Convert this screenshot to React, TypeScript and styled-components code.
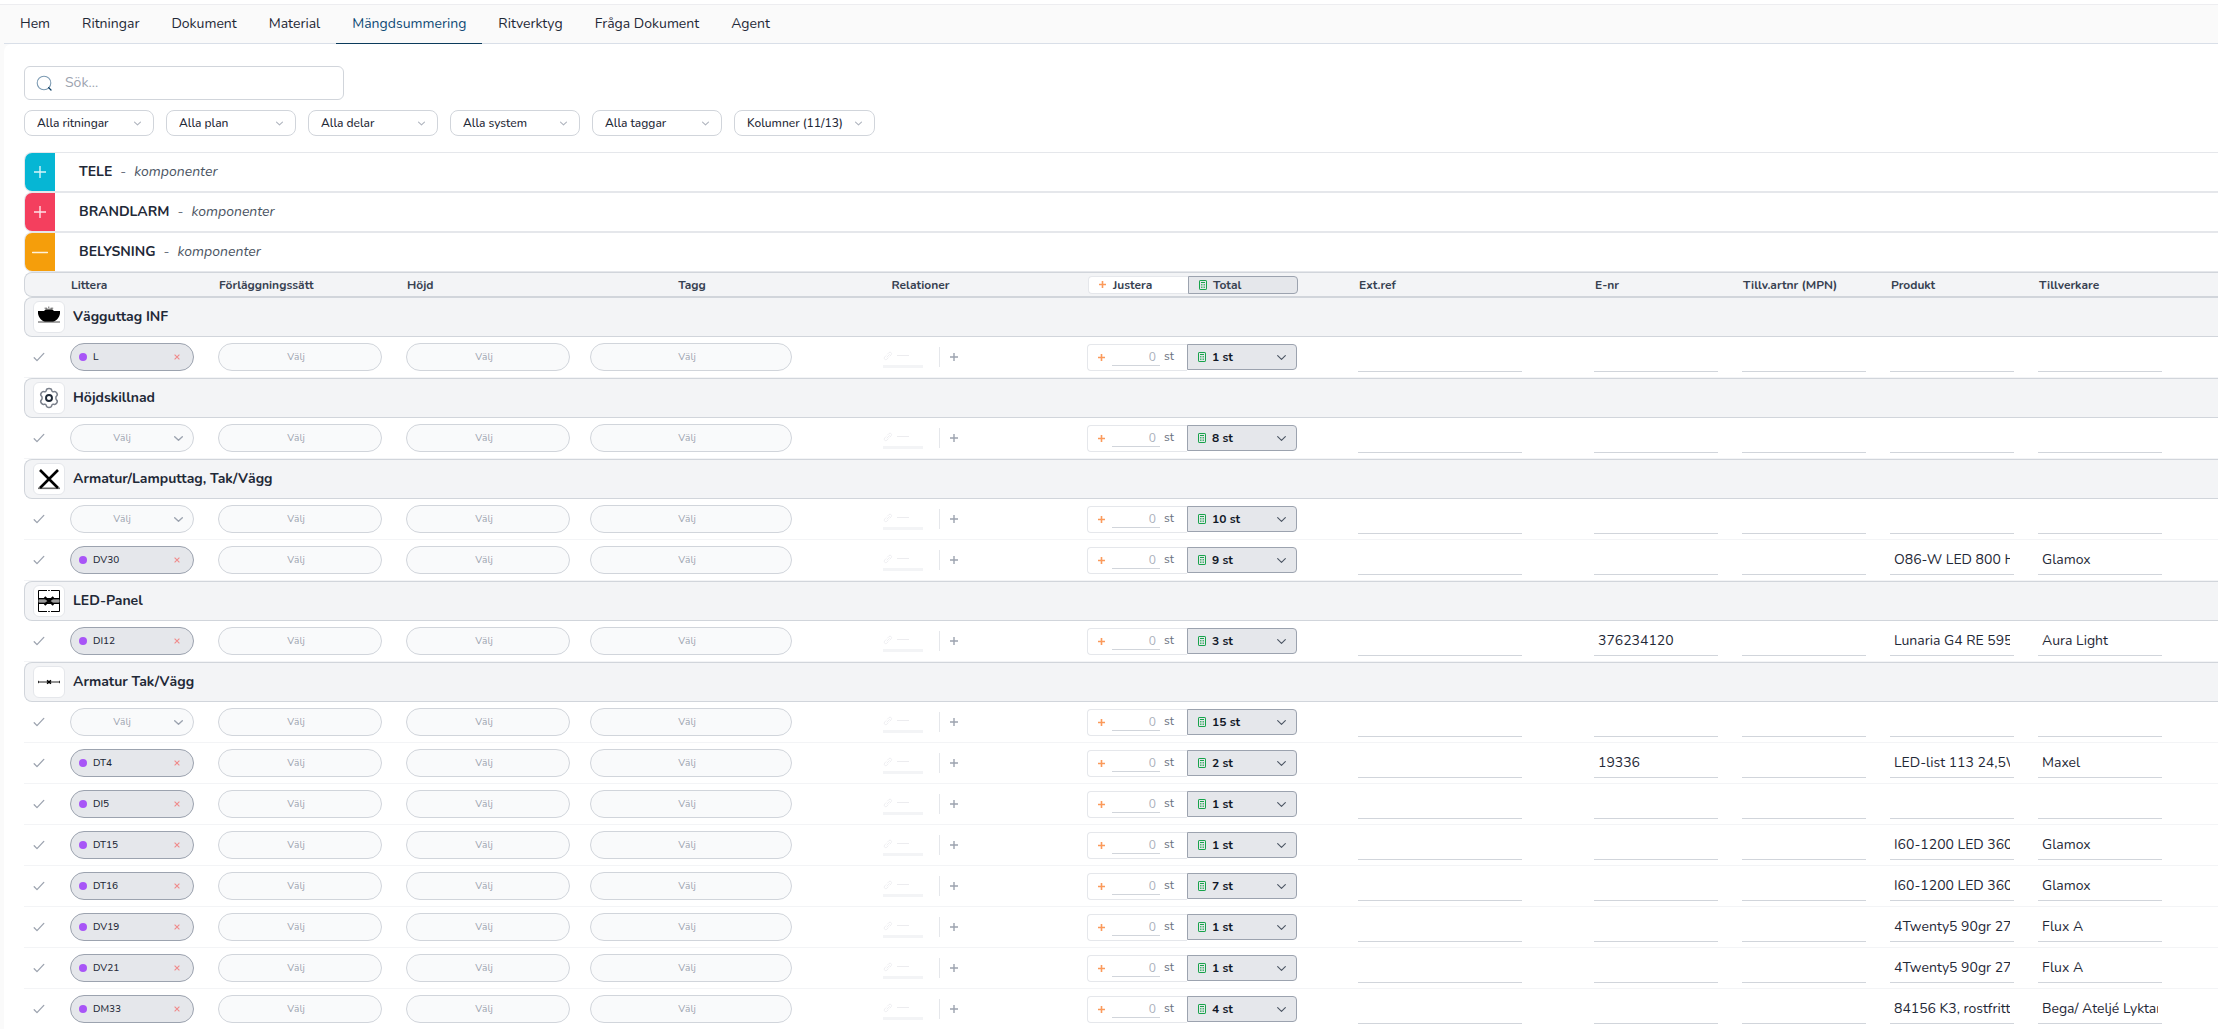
import React, { useState } from 'react';
import styled, { createGlobalStyle } from 'styled-components';

const GlobalStyle = createGlobalStyle`
  *, *::before, *::after { box-sizing: border-box; }
  body { margin: 0; background: #ffffff; }
  body, button, input, select {
    font-family: Nunito, "Open Sans", "Noto Sans", sans-serif;
    color: #1f2937;
  }
  button, input, select { margin: 0; }
  button { padding: 0; cursor: pointer; }
`;

/* ---------- shell ---------- */

const Shell = styled.div`
  display: flex;
  flex-direction: column;
  height: 100vh;
  padding-top: 4px;
  overflow: hidden;
`;

const Frame = styled.div`
  display: flex;
  flex-direction: column;
  flex: 1;
  min-height: 0;
  padding-left: 4px;
  background: #fafafa;
  border-top: 1px solid #ededf0;
`;

const Nav = styled.nav`
  display: flex;
  flex: none;
  height: 39px;
  border-bottom: 1px solid #d9dfe8;
`;

const Tab = styled.a<{ $active?: boolean }>`
  display: flex;
  align-items: center;
  margin-bottom: -1px;
  padding: 0 16px;
  border-bottom: 1px solid ${p => (p.$active ? '#0b3b5c' : 'transparent')};
  color: ${p => (p.$active ? '#0f4a75' : '#1f2937')};
  font-size: 14px;
  line-height: 20px;
  text-decoration: none;
`;

const Panel = styled.main`
  flex: 1;
  min-height: 0;
  padding: 22px 0 0 20px;
  overflow: hidden;
  background: #ffffff;
  border-top-left-radius: 8px;
`;

/* ---------- search and filters ---------- */

const SearchBox = styled.label`
  display: flex;
  align-items: center;
  gap: 12px;
  width: 320px;
  height: 34px;
  padding: 0 12px 0 11px;
  border: 1px solid #d1d5db;
  border-radius: 6px;
`;

const SearchInput = styled.input`
  flex: 1;
  min-width: 0;
  padding: 0;
  border: 0;
  outline: 0;
  background: transparent;
  font-size: 14px;
  line-height: 20px;
  &::placeholder { color: #9ca3af; opacity: 1; }
`;

const Filters = styled.div`
  display: flex;
  gap: 12px;
  margin: 10px 0 16px;
`;

const FilterField = styled.div<{ $wide?: boolean }>`
  display: grid;
  align-items: center;
  width: ${p => (p.$wide ? 141 : 130)}px;
  & > * { grid-area: 1 / 1; }
  & > svg { justify-self: end; margin-right: 13px; pointer-events: none; }
`;

const FilterSelect = styled.select`
  width: 100%;
  height: 26px;
  padding: 0 12px;
  appearance: none;
  background: #ffffff;
  border: 1px solid #d1d5db;
  border-radius: 8px;
  font-size: 12px;
  font-weight: 500;
`;

/* ---------- sections ---------- */

const Section = styled.section`
  display: flex;
  align-items: stretch;
  height: 40px;
  border: 1px solid #e5e7eb;
  border-right: 0;
  border-radius: 8px 0 0 8px;
`;

const SectionToggle = styled.button<{ $color: string }>`
  display: flex;
  align-items: center;
  justify-content: center;
  width: 30px;
  border: 0;
  border-radius: 7px 0 0 7px;
  background: ${p => p.$color};
`;

const SectionTitle = styled.h2`
  display: flex;
  align-items: center;
  gap: 8px;
  margin: 0;
  padding-left: 24px;
  color: #1f2937;
  font-size: 14px;
  font-weight: 700;
  line-height: 20px;
`;

const Dash = styled.span`
  color: #6b7280;
  font-weight: 400;
`;

const Kind = styled.em`
  color: #4b5563;
  font-weight: 400;
`;

/* ---------- table ---------- */

const Table = styled.table`
  display: block;
  & > thead, & > tbody { display: block; }
`;

const columns = '46px 148px 188px 184px 202px 255px 311px 236px 148px 148px 148px 148px 1fr';

const HeadRow = styled.tr`
  display: grid;
  grid-template-columns: ${columns};
  align-items: center;
  height: 25px;
  background: #f3f4f6;
  border: 1px solid #d1d5db;
  border-right: 0;
  border-radius: 8px 0 0 8px;
`;

const Head = styled.th<{ $align?: 'center' | 'left' }>`
  padding: 0;
  color: #374151;
  font-size: 12px;
  font-weight: 700;
  line-height: 16px;
  text-align: ${p => p.$align || 'left'};
`;

const CalcHead = styled(Head)`
  display: flex;
  padding-left: 40px;
`;

const HeadBox = styled.span<{ $total?: boolean }>`
  display: flex;
  align-items: center;
  gap: ${p => (p.$total ? 6 : 7)}px;
  width: ${p => (p.$total ? 110 : 100)}px;
  height: 18px;
  padding-left: 10px;
  background: ${p => (p.$total ? '#e5e7eb' : '#ffffff')};
  border: 1px solid ${p => (p.$total ? '#9ca3af' : '#e5e7eb')};
  border-right-width: ${p => (p.$total ? 1 : 0)}px;
  border-radius: ${p => (p.$total ? '0 4px 4px 0' : '4px 0 0 4px')};
`;

const GroupRow = styled.tr`
  display: block;
`;

const GroupCell = styled.th`
  display: flex;
  align-items: center;
  gap: 8px;
  height: 40px;
  padding: 0 8px;
  background: #f3f4f6;
  border: 1px solid #d1d5db;
  border-right: 0;
  border-radius: 8px 0 0 8px;
  color: #1f2937;
  font-size: 14px;
  font-weight: 700;
  line-height: 20px;
`;

const SymbolBox = styled.span`
  display: flex;
  align-items: center;
  justify-content: center;
  width: 32px;
  height: 32px;
  background: #ffffff;
  border: 1px solid #e5e7eb;
  border-radius: 6px;
`;

const Row = styled.tr`
  display: grid;
  grid-template-columns: ${columns};
  height: 41px;
  border-bottom: 1px solid #f3f4f6;
`;

const Cell = styled.td`
  display: flex;
  align-items: center;
  padding: 0;
`;

const CheckCell = styled(Cell)`padding-left: 9px;`;
const RelationCell = styled(Cell)`padding-left: 91px;`;
const CalcCell = styled(Cell)`padding-left: 40px;`;

const IconButton = styled.button<{ $size: number }>`
  display: flex;
  align-items: center;
  justify-content: center;
  width: ${p => p.$size}px;
  height: ${p => p.$size}px;
  background: transparent;
  border: 0;
`;

const Pill = styled.button<{ $width: number }>`
  width: ${p => p.$width}px;
  height: 28px;
  padding: 0 16px 0 8px;
  background: #f9fafb;
  border: 1px solid #d1d5db;
  border-radius: 14px;
  color: #9ca3af;
  font-size: 10px;
  line-height: 14px;
`;

const LitteraField = styled.div`
  display: grid;
  align-items: center;
  width: 124px;
  & > * { grid-area: 1 / 1; }
  & > svg { justify-self: end; margin-right: 11px; pointer-events: none; }
`;

const LitteraSelect = styled.select`
  width: 100%;
  height: 28px;
  padding: 0 28px 0 8px;
  appearance: none;
  background: #f9fafb;
  border: 1px solid #d1d5db;
  border-radius: 14px;
  color: #9ca3af;
  font-size: 10px;
  text-align: center;
  text-align-last: center;
`;

const Tag = styled.span`
  display: flex;
  align-items: center;
  width: 124px;
  height: 28px;
  padding: 0 9px 0 8px;
  background: #e5e7eb;
  border: 1px solid #9ca3af;
  border-radius: 14px;
  color: #1f2937;
  font-size: 10px;
  font-weight: 500;
  line-height: 14px;
`;

const Dot = styled.span`
  width: 8px;
  height: 8px;
  margin-right: 6px;
  border-radius: 4px;
  background: #a855f7;
`;

const TagText = styled.span`flex: 1;`;

const Relation = styled.span`
  display: flex;
  align-items: center;
  gap: 4px;
  width: 40px;
  height: 22px;
  border-bottom: 3px solid #f3f4f6;
`;

const Divider = styled.span`
  width: 1px;
  height: 20px;
  margin: 0 6px 0 16px;
  background: #e5e7eb;
`;

const Calc = styled.div`
  display: flex;
  height: 26px;
`;

const Adjust = styled.label`
  display: flex;
  align-items: center;
  width: 100px;
  height: 27px;
  padding: 0 0 1px 10px;
  border: 1px solid #e5e7eb;
  border-right: 0;
  border-radius: 4px 0 0 4px;
  color: #6b7280;
  font-size: 12px;
  line-height: 16px;
`;

const AdjustInput = styled.input`
  width: 48px;
  height: 18px;
  margin: 0 4px 0 7px;
  padding: 0 4px;
  border: 0;
  border-bottom: 1px solid #d1d5db;
  outline: 0;
  background: transparent;
  font-size: 12px;
  text-align: right;
  &::placeholder { color: #a8aeb9; opacity: 1; }
`;

const Unit = styled.span`
  height: 18px;
`;

const Total = styled.button`
  display: flex;
  align-items: center;
  gap: 6px;
  width: 110px;
  height: 26px;
  padding: 0 10px;
  background: #e5e7eb;
  border: 1px solid #9ca3af;
  border-radius: 0 4px 4px 0;
  color: #111827;
  font-size: 12px;
  font-weight: 700;
  line-height: 16px;
  text-align: left;
`;

const TotalText = styled.span`flex: 1;`;

const TextField = styled.input<{ $wide?: boolean }>`
  width: ${p => (p.$wide ? 164 : 124)}px;
  height: 30px;
  padding: 0 4px;
  border: 0;
  border-bottom: 1px solid #d1d5db;
  outline: 0;
  background: transparent;
  color: #1f2937;
  font-size: 14px;
  line-height: 20px;
`;

/* ---------- icons ---------- */

const SearchIcon = () => (
  <svg width="17" height="17" viewBox="0 0 17 17" fill="none" aria-hidden="true">
    <circle cx="8" cy="8" r="6.8" stroke="#7d9bb3" strokeWidth="1.1" />
    <path d="M12.6 12.6L15 15" stroke="#0f3f63" strokeWidth="1.3" strokeLinecap="round" />
  </svg>
);

const Chevron = ({ size, color, weight = 1 }: { size: number; color: string; weight?: number }) => (
  <svg width={size} height={size} viewBox="0 0 8 8" fill="none" aria-hidden="true">
    <path d="M0.6 2.4L4 5.6L7.4 2.4" stroke={color} strokeWidth={weight} strokeLinecap="round" strokeLinejoin="round" />
  </svg>
);

const PlusMark = ({ size, color, weight }: { size: number; color: string; weight: number }) => (
  <svg width={size} height={size} viewBox={`0 0 ${size} ${size}`} aria-hidden="true">
    <path d={`M${size / 2} 0V${size}M0 ${size / 2}H${size}`} stroke={color} strokeWidth={weight} />
  </svg>
);

const MinusMark = () => (
  <svg width="16" height="16" viewBox="0 0 16 16" aria-hidden="true">
    <path d="M0.5 8.5H15.5" stroke="#ffffff" strokeOpacity="0.85" strokeWidth="1.4" strokeLinecap="round" />
  </svg>
);

const CheckIcon = () => (
  <svg width="12" height="10" viewBox="0 0 12 10" fill="none" aria-hidden="true">
    <path d="M1.2 5.8L4 8.6L10.8 1.4" stroke="#9ca3af" strokeWidth="1.3" strokeLinecap="round" strokeLinejoin="round" />
  </svg>
);

const CrossIcon = () => (
  <svg width="6" height="6" viewBox="0 0 6 6" aria-hidden="true">
    <path d="M0.6 0.6L5.4 5.4M5.4 0.6L0.6 5.4" stroke="#f08a8a" strokeWidth="1.1" />
  </svg>
);

const CalcIcon = () => (
  <svg width="8" height="10" viewBox="0 0 8 10" fill="none" aria-hidden="true">
    <rect x="0.5" y="0.5" width="7" height="9" rx="0.6" stroke="#16a34a" />
    <path d="M2 2.5H6" stroke="#16a34a" />
    <path d="M2 4.5H3M3.5 4.5H4.5M5 4.5H6M2 6H3M3.5 6H4.5M5 6H6M2 7.5H3M3.5 7.5H4.5M5 7.5H6" stroke="#16a34a" strokeOpacity="0.75" />
  </svg>
);

const LinkIcon = () => (
  <svg width="10" height="10" viewBox="0 0 10 10" fill="none" aria-hidden="true">
    <path d="M4 6L6.4 3.6M4.6 3L6 1.5C7.4 .4 9.4 2 8.2 3.8L6.8 5.2M5.2 6.8L3.8 8.3C2.3 9.5 .5 7.8 1.6 6.1L3 4.7" stroke="#ececef" strokeWidth="0.9" strokeLinecap="round" />
  </svg>
);

const ShortLine = () => (
  <svg width="12" height="1" viewBox="0 0 12 1" aria-hidden="true">
    <path d="M0 0.5H12" stroke="#ececef" />
  </svg>
);

type SymbolKind = 'bowl' | 'gear' | 'cross' | 'panel' | 'fixture';

const SymbolIcon = ({ kind }: { kind: SymbolKind }) => (
  <svg width="22" height="22" viewBox="0 0 22 22" fill="none" aria-hidden="true">
    {kind === 'bowl' && (
      <>
        <path d="M0 5H6L7.5 3.6H14.5L16 5H22V7.5C21.4 12 18 14.6 15 16H7C4 14.6 0.6 12 0 7.5Z" fill="#000000" />
        <path d="M6.6 2.2H9M10 1.2H11.4M12.6 2.2H15.2M8 3.1H14" stroke="#555555" strokeWidth="0.9" />
        <path d="M0 16H22" stroke="#6b6b6b" strokeWidth="1.2" />
      </>
    )}
    {kind === 'gear' && (
      <>
        <path
          d="M8.3 3.4C8.7 1 13.3 1 13.7 3.4C13.9 4.6 14.9 5.1 15.9 4.7C18 4 20.4 7.4 18.7 8.9C17.6 9.8 17.6 12.2 18.7 13.1C20.4 14.6 18 18 15.9 17.3C14.9 16.9 13.9 17.4 13.7 18.6C13.3 21 8.7 21 8.3 18.6C8.1 17.4 7.1 16.9 6.1 17.3C4 18 1.6 14.6 3.3 13.1C4.4 12.2 4.4 9.8 3.3 8.9C1.6 7.4 4 4 6.1 4.7C7.1 5.1 8.1 4.6 8.3 3.4Z"
          stroke="#7b818c"
          strokeWidth="1.5"
        />
        <circle cx="11" cy="11" r="3" stroke="#1f2937" strokeWidth="1.9" />
      </>
    )}
    {kind === 'cross' && (
      <>
        <path d="M0 20.3H22" stroke="#6b6b6b" strokeWidth="1.6" />
        <path d="M2 2L20 20M20 2L2 20" stroke="#000000" strokeWidth="2.6" />
      </>
    )}
    {kind === 'panel' && (
      <>
        <path d="M9 0.5H0.5V21.5H9M13 0.5H21.5V21.5H13M10.2 0.5H11.8M10.2 21.5H11.8" stroke="#000000" />
        <path d="M0.5 11H21.5" stroke="#9a9a9a" strokeWidth="3" />
        <path d="M0.5 8.7H21.5M0.5 13.3H21.5" stroke="#000000" strokeWidth="1.5" />
        <path d="M6.5 7.2L15.5 14.8M15.5 7.2L6.5 14.8" stroke="#000000" strokeWidth="2.2" />
      </>
    )}
    {kind === 'fixture' && (
      <>
        <path d="M0 11H22" stroke="#7a7a7a" strokeWidth="1.6" />
        <path d="M0.5 9.8V12.2M21.5 9.8V12.2" stroke="#333333" />
        <path d="M9 9.4L13 12.6M13 9.4L9 12.6" stroke="#000000" strokeWidth="1.5" />
      </>
    )}
  </svg>
);

/* ---------- data ---------- */

const tabs = ['Hem', 'Ritningar', 'Dokument', 'Material', 'Mängdsummering', 'Ritverktyg', 'Fråga Dokument', 'Agent'];
const filters = ['Alla ritningar', 'Alla plan', 'Alla delar', 'Alla system', 'Alla taggar', 'Kolumner (11/13)'];

const sections = [
  { name: 'TELE', color: '#06b6d4' },
  { name: 'BRANDLARM', color: '#f43f5e' },
  { name: 'BELYSNING', color: '#f59e0b', open: true },
];

type Item = { littera?: string; total: number; enr?: string; product?: string; maker?: string };

const groups: { name: string; symbol: SymbolKind; items: Item[] }[] = [
  { name: 'Vägguttag INF', symbol: 'bowl', items: [{ littera: 'L', total: 1 }] },
  { name: 'Höjdskillnad', symbol: 'gear', items: [{ total: 8 }] },
  {
    name: 'Armatur/Lamputtag, Tak/Vägg',
    symbol: 'cross',
    items: [{ total: 10 }, { littera: 'DV30', total: 9, product: 'O86-W LED 800 HF 840', maker: 'Glamox' }],
  },
  {
    name: 'LED-Panel',
    symbol: 'panel',
    items: [{ littera: 'DI12', total: 3, enr: '376234120', product: 'Lunaria G4 RE 595x595', maker: 'Aura Light' }],
  },
  {
    name: 'Armatur Tak/Vägg',
    symbol: 'fixture',
    items: [
      { total: 15 },
      { littera: 'DT4', total: 2, enr: '19336', product: 'LED-list 113 24,5W', maker: 'Maxel' },
      { littera: 'DI5', total: 1 },
      { littera: 'DT15', total: 1, product: 'I60-1200 LED 3600', maker: 'Glamox' },
      { littera: 'DT16', total: 7, product: 'I60-1200 LED 3600', maker: 'Glamox' },
      { littera: 'DV19', total: 1, product: '4Twenty5 90gr 2700K', maker: 'Flux A' },
      { littera: 'DV21', total: 1, product: '4Twenty5 90gr 2700K', maker: 'Flux A' },
      { littera: 'DM33', total: 4, product: '84156 K3, rostfritt stål', maker: 'Bega/ Ateljé Lyktan' },
    ],
  },
];

/* ---------- view ---------- */

const ItemRow = ({ item }: { item: Item }) => (
  <Row>
    <CheckCell>
      <IconButton $size={12} aria-label="Markera klar"><CheckIcon /></IconButton>
    </CheckCell>
    <Cell>
      {item.littera ? (
        <Tag>
          <Dot />
          <TagText>{item.littera}</TagText>
          <IconButton $size={14} aria-label={`Ta bort ${item.littera}`}><CrossIcon /></IconButton>
        </Tag>
      ) : (
        <LitteraField>
          <LitteraSelect aria-label="Littera"><option>Välj</option></LitteraSelect>
          <Chevron size={9} color="#9ca3af" weight={1.2} />
        </LitteraField>
      )}
    </Cell>
    <Cell><Pill $width={164} aria-label="Förläggningssätt">Välj</Pill></Cell>
    <Cell><Pill $width={164} aria-label="Höjd">Välj</Pill></Cell>
    <Cell><Pill $width={202} aria-label="Tagg">Välj</Pill></Cell>
    <RelationCell>
      <Relation><LinkIcon /><ShortLine /></Relation>
      <Divider />
      <IconButton $size={16} aria-label="Lägg till relation"><PlusMark size={8} color="#9ca3af" weight={1.4} /></IconButton>
    </RelationCell>
    <CalcCell>
      <Calc>
        <Adjust>
          <PlusMark size={7} color="#fb9a5b" weight={1.6} />
          <AdjustInput placeholder="0" aria-label="Justera antal" />
          <Unit>st</Unit>
        </Adjust>
        <Total>
          <CalcIcon />
          <TotalText>{item.total} st</TotalText>
          <Chevron size={9} color="#4b5563" />
        </Total>
      </Calc>
    </CalcCell>
    <Cell><TextField $wide aria-label="Ext.ref" /></Cell>
    <Cell><TextField aria-label="E-nr" defaultValue={item.enr} /></Cell>
    <Cell><TextField aria-label="Tillv.artnr (MPN)" /></Cell>
    <Cell><TextField aria-label="Produkt" defaultValue={item.product} /></Cell>
    <Cell><TextField aria-label="Tillverkare" defaultValue={item.maker} /></Cell>
  </Row>
);

export default function App() {
  const [query, setQuery] = useState('');
  return (
    <Shell>
      <GlobalStyle />
      <Frame>
        <Nav>
          {tabs.map(t => (
            <Tab key={t} href="#" $active={t === 'Mängdsummering'}>{t}</Tab>
          ))}
        </Nav>
        <Panel>
          <SearchBox>
            <SearchIcon />
            <SearchInput placeholder="Sök..." aria-label="Sök" value={query} onChange={e => setQuery(e.target.value)} />
          </SearchBox>
          <Filters>
            {filters.map(f => (
              <FilterField key={f} $wide={f.startsWith('Kolumner')}>
                <FilterSelect aria-label={f}><option>{f}</option></FilterSelect>
                <Chevron size={7} color="#b0b5bf" weight={1.3} />
              </FilterField>
            ))}
          </Filters>
          {sections.map(s => (
            <Section key={s.name}>
              <SectionToggle $color={s.color} aria-label={s.name} aria-expanded={!!s.open}>
                {s.open ? <MinusMark /> : <PlusMark size={12} color="rgba(255,255,255,0.85)" weight={1.4} />}
              </SectionToggle>
              <SectionTitle>
                {s.name}
                <Dash>-</Dash>
                <Kind>komponenter</Kind>
              </SectionTitle>
            </Section>
          ))}
          <Table>
            <thead>
              <HeadRow>
                <Head aria-label="Status" />
                <Head>Littera</Head>
                <Head>Förläggningssätt</Head>
                <Head>Höjd</Head>
                <Head $align="center">Tagg</Head>
                <Head $align="center">Relationer</Head>
                <CalcHead>
                  <HeadBox><PlusMark size={7} color="#fb9a5b" weight={1.6} />Justera</HeadBox>
                  <HeadBox $total><CalcIcon />Total</HeadBox>
                </CalcHead>
                <Head>Ext.ref</Head>
                <Head>E-nr</Head>
                <Head>Tillv.artnr (MPN)</Head>
                <Head>Produkt</Head>
                <Head>Tillverkare</Head>
              </HeadRow>
            </thead>
            {groups.map(g => (
              <tbody key={g.name}>
                <GroupRow>
                  <GroupCell scope="rowgroup">
                    <SymbolBox><SymbolIcon kind={g.symbol} /></SymbolBox>
                    {g.name}
                  </GroupCell>
                </GroupRow>
                {g.items.map((item, i) => <ItemRow key={i} item={item} />)}
              </tbody>
            ))}
          </Table>
        </Panel>
      </Frame>
    </Shell>
  );
}
